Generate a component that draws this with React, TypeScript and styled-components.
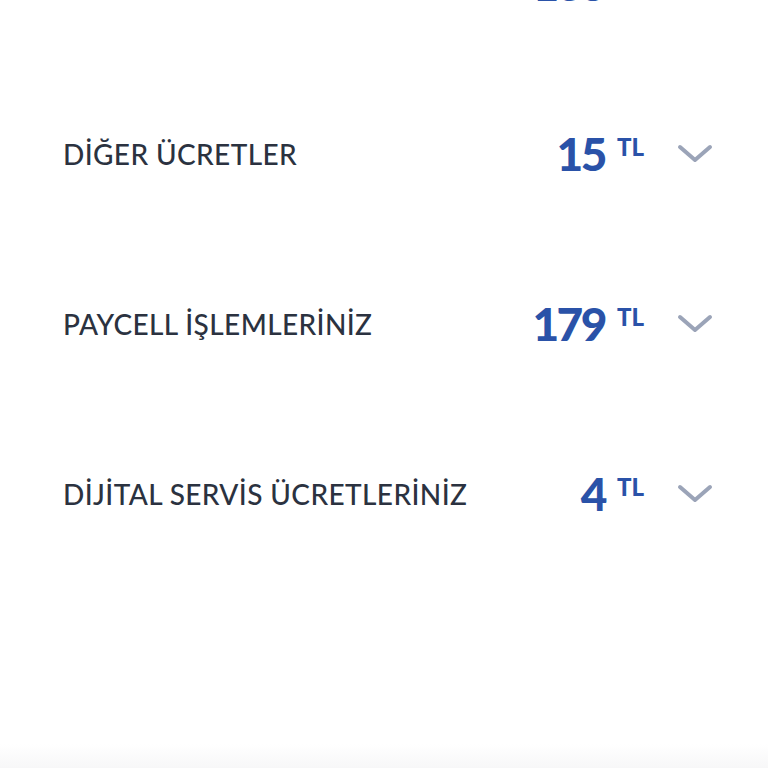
import React from "react";
import styled, { createGlobalStyle } from "styled-components";

const GlobalStyle = createGlobalStyle`
  html, body {
    margin: 0;
    padding: 0;
    background-color: #ffffff;
  }
`;

const Page = styled.div`
  width: 100%;
  height: 768px;
  overflow: hidden;
  display: flex;
  flex-direction: column;
  background-color: #ffffff;
  font-family: "Lato", "Noto Sans", sans-serif;
`;

const List = styled.ul`
  list-style: none;
  margin: -101px 0 0 0;
  padding: 0;
  flex: 1;
`;

const Row = styled.li`
  height: 170px;
  display: flex;
  align-items: center;
  padding: 0 55px 0 63px;
  box-sizing: border-box;
  cursor: pointer;
`;

const Label = styled.div`
  flex: 1;
  font-size: 28px;
  font-weight: 500;
  color: #2b3240;
  letter-spacing: 0.4px;
`;

const Amount = styled.div`
  display: flex;
  align-items: flex-start;
  color: #2a52a8;
`;

const Value = styled.span`
  font-size: 46px;
  font-weight: 900;
  line-height: 1;
  letter-spacing: -2.5px;
`;

const Currency = styled.span`
  font-size: 24px;
  font-weight: 900;
  line-height: 1;
  margin: 4px 0 0 12px;
`;

const Chevron = styled.svg`
  width: 36px;
  height: 22px;
  margin-left: 33px;
  flex-shrink: 0;
`;

const Footer = styled.div`
  height: 24px;
  flex-shrink: 0;
  background: linear-gradient(#ffffff, #f7f7f8);
`;

type Fee = {
  title: string;
  amount: number;
};

const fees: Fee[] = [
  { title: "FATURA TUTARI", amount: 135 },
  { title: "DİĞER ÜCRETLER", amount: 15 },
  { title: "PAYCELL İŞLEMLERİNİZ", amount: 179 },
  { title: "DİJİTAL SERVİS ÜCRETLERİNİZ", amount: 4 },
];

const App = () => {
  return (
    <Page>
      <GlobalStyle />
      <List>
        {fees.map((fee) => (
          <Row key={fee.title}>
            <Label>{fee.title}</Label>
            <Amount>
              <Value>{fee.amount}</Value>
              <Currency>TL</Currency>
            </Amount>
            <Chevron viewBox="0 0 36 22" fill="none">
              <path
                d="M3 4 L18 17 L33 4"
                stroke="#9ba4b8"
                strokeWidth="4"
                strokeLinecap="round"
                strokeLinejoin="round"
              />
            </Chevron>
          </Row>
        ))}
      </List>
      <Footer />
    </Page>
  );
};

export default App;
